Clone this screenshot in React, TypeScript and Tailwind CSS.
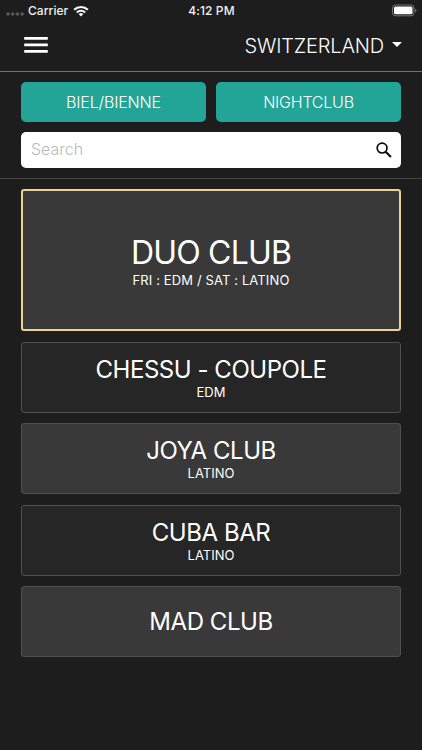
const clubs = [
  { name: 'CHESSU - COUPOLE', music: 'EDM', style: 'bg-[#262626]' },
  { name: 'JOYA CLUB', music: 'LATINO', style: 'bg-[#393939]' },
  { name: 'CUBA BAR', music: 'LATINO', style: 'bg-[#262626]' },
  { name: 'MAD CLUB', music: '', style: 'bg-[#393939]' },
];

function StatusBar() {
  return (
    <div className="grid h-5 grid-cols-3 items-center pl-[6px] pr-[5px] text-[12px] font-medium leading-5 text-[#f2f2f2]">
      <div className="flex items-center">
        <svg className="mt-[7px] h-[4px] w-[18px]" viewBox="0 0 18 4" fill="#5a5a5a">
          <circle cx="2" cy="2" r="1.8" />
          <circle cx="6.7" cy="2" r="1.8" />
          <circle cx="11.4" cy="2" r="1.8" />
          <circle cx="16.1" cy="2" r="1.8" />
        </svg>
        <span className="ml-1 mt-[1px] tracking-[0.05px]">Carrier</span>
        <svg className="ml-[5px] h-[12px] w-[16px]" viewBox="0 0 16 12" fill="none" stroke="#f7f7f7" strokeWidth="2.1">
          <path d="M1.1 4.8a9.9 9.9 0 0 1 13.8 0" />
          <path d="M3.8 7.5a6 6 0 0 1 8.4 0" />
          <path d="M8 11.6 5.6 9.1a3.5 3.5 0 0 1 4.8 0Z" fill="#f7f7f7" stroke="none" />
        </svg>
      </div>
      <span className="mt-[1px] text-center tracking-[0.1px]">4:12 PM</span>
      <svg className="h-[13px] w-[26px] justify-self-end" viewBox="0 0 26 13">
        <rect x="1.5" y="1" width="21.5" height="10.8" rx="3" fill="none" stroke="#777" />
        <rect x="3" y="2.5" width="18.5" height="7.8" rx="1.6" fill="#fff" />
        <path d="M24.2 4.5q2.4 2 0 4Z" fill="#777" />
      </svg>
    </div>
  );
}

export default function App() {
  return (
    <main className="flex h-[750px] w-[422px] flex-col overflow-hidden bg-[#1d1d1d] font-['Inter','Liberation_Sans',sans-serif] text-white">
      <StatusBar />
      <header className="flex h-[52px] items-center justify-between border-b border-[#737373] pl-6 pr-[20.5px]">
        <svg className="mb-[2px] h-[16px] w-[24px]" viewBox="0 0 24 16" fill="#fff">
          <path d="M.2 0h23.6v2.7H.2zM.2 6.6h23.6v2.7H.2zM.2 13h23.6v2.7H.2z" />
        </svg>
        <button className="flex items-center gap-[7.5px]">
          <span className="text-[20px] font-light leading-6 tracking-[-0.17px]">SWITZERLAND</span>
          <svg className="mb-[2px] h-[5px] w-[10px]" viewBox="0 0 10 5" fill="#fff">
            <path d="M0 0h10L5 5Z" />
          </svg>
        </button>
      </header>
      <section className="flex h-[107px] flex-col gap-[10px] border-b border-[#464646] px-[21px] pt-[10px]">
        <div className="grid h-10 grid-cols-2 gap-[10px] text-[16px] font-light">
          <button className="rounded-[5px] bg-[#22a596] tracking-[-0.15px]">BIEL/BIENNE</button>
          <button className="rounded-[5px] bg-[#22a596] tracking-[-0.22px]">NIGHTCLUB</button>
        </div>
        <div className="flex h-[36px] items-center justify-between rounded-[5px] bg-white pl-[10px] pr-[9.5px]">
          <span className="mb-[2px] text-[16px] font-light text-[#b9b9be]">Search</span>
          <svg className="mb-[1px] h-4 w-4" viewBox="0 0 16 16" fill="none" stroke="#090909" strokeWidth="1.7">
            <circle cx="6.1" cy="6.1" r="4.9" />
            <path d="m9.7 9.7 5.2 5.2" strokeWidth="2.1" />
          </svg>
        </div>
      </section>
      <section className="flex flex-col gap-[10.5px] px-[21px] pt-[10px]">
        <article className="flex h-[142px] flex-col items-center rounded-[3px] border-2 border-[#ecd096] bg-[#393939] pt-[42px]">
          <h1 className="text-[32px] leading-[39px] tracking-[-0.8px]">DUO CLUB</h1>
          <p className="text-[13px] leading-4 tracking-[0.12px]">FRI : EDM / SAT : LATINO</p>
        </article>
        {clubs.map((club) => (
          <article key={club.name} className={`flex h-[71px] flex-col items-center justify-center rounded-[3px] border border-[#505050] ${club.style}`}>
            <h2 className="text-[24px] leading-[29px] tracking-[-0.46px]">{club.name}</h2>
            {club.music && <p className="text-[13px] leading-4">{club.music}</p>}
          </article>
        ))}
      </section>
    </main>
  );
}
